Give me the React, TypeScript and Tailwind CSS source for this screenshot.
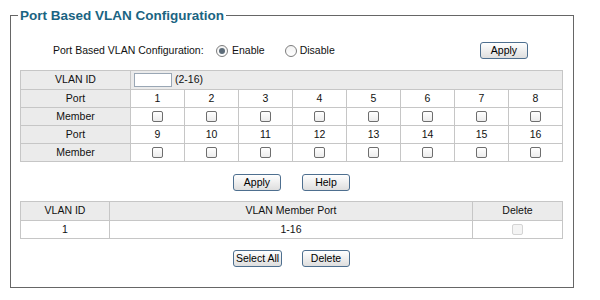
import React from 'react';

const ports = [1, 2, 3, 4, 5, 6, 7, 8];

function Checkbox({ disabled }: { disabled?: boolean }) {
  return (
    <span
      className={
        disabled
          ? 'inline-block w-[11px] h-[11px] rounded-[2px] border border-[#d4d4d4] bg-[#f4f4f4] align-middle'
          : 'inline-block w-[11px] h-[11px] rounded-[2px] border border-[#6e6e6e] bg-gradient-to-b from-white to-[#ececec] align-middle'
      }
    />
  );
}

function Radio({ checked }: { checked?: boolean }) {
  return (
    <span className="inline-flex items-center justify-center w-[12px] h-[12px] rounded-full border border-[#7d7d7d] bg-gradient-to-b from-[#f2f2f2] to-white">
      {checked && <span className="w-[6px] h-[6px] rounded-full bg-[#5c6b78]" />}
    </span>
  );
}

function Btn({ label, w }: { label: string; w: string }) {
  return (
    <button
      className={`${w} h-[17px] px-0 whitespace-nowrap rounded-[3px] border border-[#4e6f8f] bg-gradient-to-b from-white to-[#dedede] text-[10.5px] leading-none text-black`}
    >
      {label}
    </button>
  );
}

export default function App() {
  const cell = 'border border-[#c6c6c6] text-center';
  const head = 'border border-[#c6c6c6] text-center bg-[#ebebeb]';

  return (
    <div className="w-[600px] h-[300px] bg-white pt-[7px] pl-[10px] text-[10.5px] text-[#111] font-['Liberation_Sans',Arial,sans-serif]">
      <fieldset className="w-[564px] h-[281px] border border-[#666] px-[9px]">
        <legend className="ml-[-2px] px-[2px] text-[13.5px] leading-[17px] font-bold text-[#1a6482]">
          Port Based VLAN Configuration
        </legend>

        <div className="mt-[18px] h-[17px] flex items-center">
          <span className="ml-[33px] w-[163px]">Port Based VLAN Configuration:</span>
          <span className="flex items-center gap-[4px]">
            <Radio checked />
            Enable
          </span>
          <span className="ml-[20px] flex items-center gap-[3px]">
            <Radio />
            Disable
          </span>
          <span className="ml-auto mr-[36px]">
            <Btn label="Apply" w="w-[48px]" />
          </span>
        </div>

        <table className="mt-[11px] w-[543px] table-fixed border-collapse">
          <colgroup>
            <col className="w-[110px]" />
            {ports.map(p => (
              <col key={p} />
            ))}
          </colgroup>
          <tbody>
            <tr className="h-[19px]">
              <td className={head}>VLAN ID</td>
              <td className="border border-[#c6c6c6] bg-[#ebebeb] text-left pl-[3px]" colSpan={8}>
                <span className="flex items-center gap-[3px]">
                  <span className="inline-block w-[38px] h-[14px] border border-[#9aa7b5] bg-white" />
                  (2-16)
                </span>
              </td>
            </tr>
            {[ports, ports.map(p => p + 8)].map((row, i) => (
              <React.Fragment key={i}>
                <tr className="h-[18px]">
                  <td className={head}>Port</td>
                  {row.map(p => (
                    <td key={p} className={cell}>
                      {p}
                    </td>
                  ))}
                </tr>
                <tr className="h-[18px]">
                  <td className={head}>Member</td>
                  {row.map(p => (
                    <td key={p} className={cell}>
                      <Checkbox />
                    </td>
                  ))}
                </tr>
              </React.Fragment>
            ))}
          </tbody>
        </table>

        <div className="mt-[12px] w-[543px] flex justify-center gap-[21px]">
          <Btn label="Apply" w="w-[48px]" />
          <Btn label="Help" w="w-[48px]" />
        </div>

        <table className="mt-[10px] w-[543px] table-fixed border-collapse">
          <colgroup>
            <col className="w-[89px]" />
            <col className="w-[363px]" />
            <col />
          </colgroup>
          <tbody>
            <tr className="h-[19px]">
              <td className={head}>VLAN ID</td>
              <td className={head}>VLAN Member Port</td>
              <td className={head}>Delete</td>
            </tr>
            <tr className="h-[18px]">
              <td className={cell}>1</td>
              <td className={cell}>1-16</td>
              <td className={cell}>
                <Checkbox disabled />
              </td>
            </tr>
          </tbody>
        </table>

        <div className="mt-[11px] w-[543px] flex justify-center gap-[20px]">
          <Btn label="Select All" w="w-[49px]" />
          <Btn label="Delete" w="w-[48px]" />
        </div>
      </fieldset>
    </div>
  );
}
